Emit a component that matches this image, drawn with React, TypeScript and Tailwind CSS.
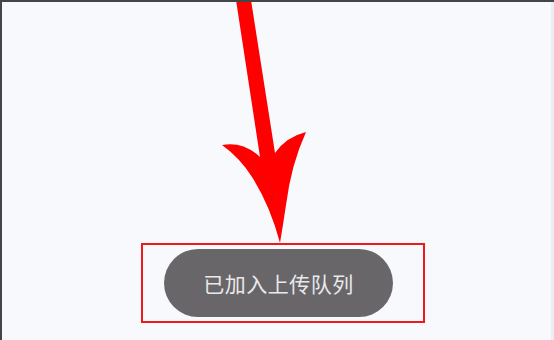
export default function App() {
  return (
    <div className="relative h-[340px] w-[554px] overflow-hidden border-l-2 border-t-2 border-[#454545] bg-[#f8f9fd]">
      {/* faint right edge */}
      <div className="absolute right-0 top-0 h-full w-[3px] bg-[#eceef2]" />

      <div className="pl-[139px] pt-[241px]">
        <div className="h-[80px] w-[284px] border-2 border-[#f01818] pl-[21px] pt-[4px]">
          <div className="flex h-[68px] w-[229px] items-center justify-center rounded-full bg-[#686669]">
            <span
              className="text-[21px] leading-none tracking-[0.5px] text-[#e9e9ea]"
              style={{ fontFamily: '"Noto Sans CJK SC", "Noto Sans", sans-serif' }}
            >
              已加入上传队列
            </span>
          </div>
        </div>
      </div>

      {/* annotation arrow */}
      <svg
        className="pointer-events-none absolute left-[-2px] top-[-2px]"
        width="554"
        height="340"
        viewBox="0 0 554 340"
      >
        <path
          d="M236 0 L251 0 L275 153 Q286 137 306 132 Q291 165 286 205 Q283 225 280 243 Q270 205 252 177 Q240 158 222 145 Q243 141 260 157 Z"
          fill="#fe0000"
        />
      </svg>
    </div>
  );
}
